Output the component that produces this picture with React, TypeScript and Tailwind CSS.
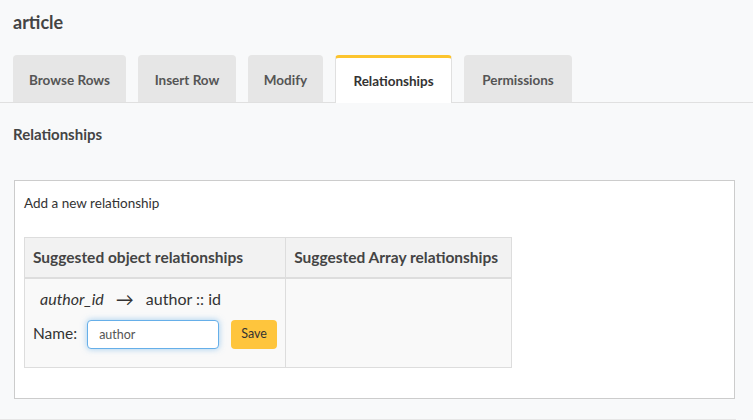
const tabs = ['Browse Rows', 'Insert Row', 'Modify', 'Relationships', 'Permissions']

const App = () => {
  return (
    <div className="min-h-[420px] bg-[#f8f9fa] font-['Lato','Noto_Sans',sans-serif] text-[#333]">
      <div className="px-[13px] pt-[12px]">
        <h2 className="text-[18px] font-bold leading-5 text-[#444]">article</h2>
      </div>

      {/* tabs */}
      <div className="mt-[23px] flex h-[48px] items-end gap-[12px] border-b border-[#e0e0e0] pl-[13px]">
        {tabs.map((tab) => {
          const active = tab === 'Relationships'
          return active ? (
            <div
              key={tab}
              className="-mb-px flex h-[48px] w-[117px] items-center justify-center rounded-t-[4px] border-x border-t-[3px] border-x-[#e0e0e0] border-t-[#fcc42e] bg-white pt-[2px] text-[13.5px] font-bold text-[#333]"
            >
              {tab}
            </div>
          ) : (
            <div
              key={tab}
              className={`flex h-[47px] items-center justify-center rounded-t-[4px] bg-[#e6e6e6] pt-[4px] text-[13.5px] font-bold text-[#555] ${
                tab === 'Browse Rows' ? 'w-[113px]' : tab === 'Insert Row' ? 'w-[98px]' : tab === 'Modify' ? 'w-[75px]' : 'w-[108px]'
              }`}
            >
              {tab}
            </div>
          )
        })}
      </div>

      <div className="pl-[13px] pr-[18px]">
        <h4 className="pt-[21px] text-[15px] font-bold leading-5 text-[#444]">Relationships</h4>

        <div className="mt-[36px] ml-px border border-[#ccc] bg-white px-[9px] pt-[12px] pb-[30px]">
          <div className="text-[13.5px] leading-5 text-[#333]">Add a new relationship</div>

          <table className="mt-[24px] border-collapse text-[#333]">
            <thead>
              <tr className="bg-[#f2f2f2]">
                <th className="h-[40px] w-[261px] border border-[#ddd] border-b-2 px-[8px] text-left text-[15.5px] font-bold text-[#444]">
                  Suggested object relationships
                </th>
                <th className="h-[40px] w-[226px] border border-[#ddd] border-b-2 px-[8px] text-left text-[15.5px] font-bold text-[#444]">
                  Suggested Array relationships
                </th>
              </tr>
            </thead>
            <tbody>
              <tr className="bg-[#f9f9f9]">
                <td className="h-[90px] border border-[#ddd] px-[8px] align-top">
                  <div className="mt-[10px] flex items-center pl-[7px] text-[16px] leading-5">
                    <i>author_id</i>
                    <span className="ml-[12px] mr-[12px] text-[18px]">→</span>
                    <span>author :: id</span>
                  </div>
                  <div className="mt-[11px] flex items-center">
                    <span className="text-[15.5px]">Name:</span>
                    <input
                      readOnly
                      value="author"
                      className="ml-[10px] h-[29px] w-[132px] rounded-[4px] border border-[#66afe9] bg-white px-[11px] text-[12.5px] text-[#555] shadow-[0_0_6px_rgba(102,175,233,0.6)] outline-none"
                    />
                    <button className="ml-[12px] h-[29px] w-[46px] rounded-[4px] bg-[#fec53d] text-[12.5px] text-[#333]">
                      Save
                    </button>
                  </div>
                </td>
                <td className="h-[90px] border border-[#ddd]" />
              </tr>
            </tbody>
          </table>
        </div>
      </div>
      <div className="mt-[20px] mr-[17px] border-b border-[#e6e6e6]" />
    </div>
  )
}

export default App
